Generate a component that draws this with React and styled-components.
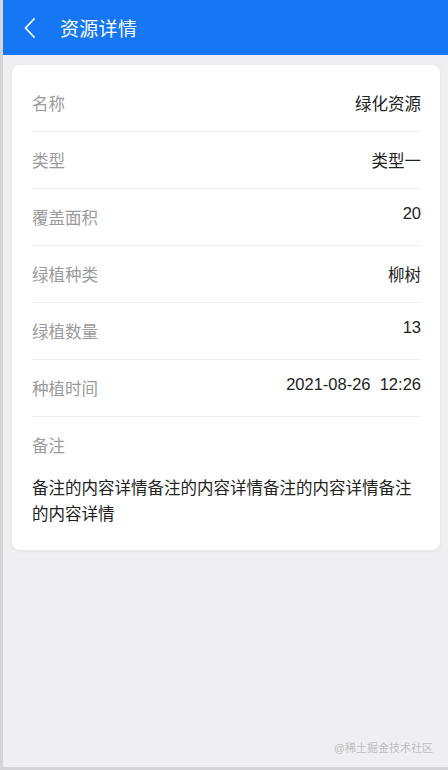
import React from 'react';
import styled, { createGlobalStyle } from 'styled-components';

const GlobalStyle = createGlobalStyle`
    html, body {
        margin: 0;
        padding: 0;
    }
    body {
        font-family: "Liberation Sans", "Noto Sans CJK SC", sans-serif;
        background: #efeff2;
    }
`;

const Page = styled.div`
    position: relative;
    box-sizing: border-box;
    height: 770px;
    border-left: 3px solid #d5d5d8;
    border-bottom: 3px solid #d5d5d8;
    background: #efeff2;
    display: flex;
    flex-direction: column;
`;

const Header = styled.header`
    height: 55px;
    background: #1677f5;
    display: flex;
    align-items: center;
    color: #fff;
    flex-shrink: 0;
`;

const BackButton = styled.button`
    border: none;
    background: transparent;
    padding: 0;
    margin-left: 16px;
    width: 22px;
    height: 22px;
    display: flex;
    align-items: center;
    justify-content: center;
    cursor: pointer;
`;

const Title = styled.h1`
    margin: 0 0 0 19px;
    font-size: 19px;
    font-weight: 400;
    letter-spacing: 0.3px;
`;

const Card = styled.section`
    margin: 10px 8px 0 9px;
    padding: 10px 19px 23px 20px;
    background: #fff;
    border-radius: 8px;
    box-shadow: 0 1px 4px rgba(0, 0, 0, 0.06);
`;

const Row = styled.div`
    display: flex;
    align-items: center;
    justify-content: space-between;
    height: 56px;
    border-bottom: 1px solid #efefef;
`;

const Label = styled.span`
    font-size: 16.5px;
    color: #9b9b9b;
`;

const Value = styled.span`
    font-size: 16.5px;
    color: #222;
    white-space: pre;
    margin-bottom: ${(p) => (p.$numeric ? '8px' : '0')};
`;

const Remark = styled.div`
    padding-top: 18px;
    display: flex;
    flex-direction: column;
    gap: 18px;
`;

const RemarkLabel = styled(Label)`
    line-height: 22px;
`;

const RemarkText = styled.p`
    margin: 0;
    font-size: 16.5px;
    line-height: 26px;
    color: #222;
`;

const Watermark = styled.span`
    position: absolute;
    right: 15px;
    bottom: 12px;
    font-size: 11px;
    color: #bdbdc2;
`;

const fields = [
    { label: '名称', value: '绿化资源' },
    { label: '类型', value: '类型一' },
    { label: '覆盖面积', value: '20', numeric: true },
    { label: '绿植种类', value: '柳树' },
    { label: '绿植数量', value: '13', numeric: true },
    { label: '种植时间', value: '2021-08-26  12:26', numeric: true },
];

const App = () => {
    return (
        <>
            <GlobalStyle />
            <Page>
                <Header>
                    <BackButton aria-label="返回">
                        <svg width="12" height="20" viewBox="0 0 12 20" fill="none">
                            <polyline points="10,1 1.5,10 10,19" stroke="#fff" strokeWidth="1.8" strokeLinecap="round" strokeLinejoin="round" />
                        </svg>
                    </BackButton>
                    <Title>资源详情</Title>
                </Header>
                <Card>
                    {fields.map((f) => (
                        <Row key={f.label}>
                            <Label>{f.label}</Label>
                            <Value $numeric={f.numeric}>{f.value}</Value>
                        </Row>
                    ))}
                    <Remark>
                        <RemarkLabel>备注</RemarkLabel>
                        <RemarkText>备注的内容详情备注的内容详情备注的内容详情备注的内容详情</RemarkText>
                    </Remark>
                </Card>
                <Watermark>@稀土掘金技术社区</Watermark>
            </Page>
        </>
    );
};

export default App;
